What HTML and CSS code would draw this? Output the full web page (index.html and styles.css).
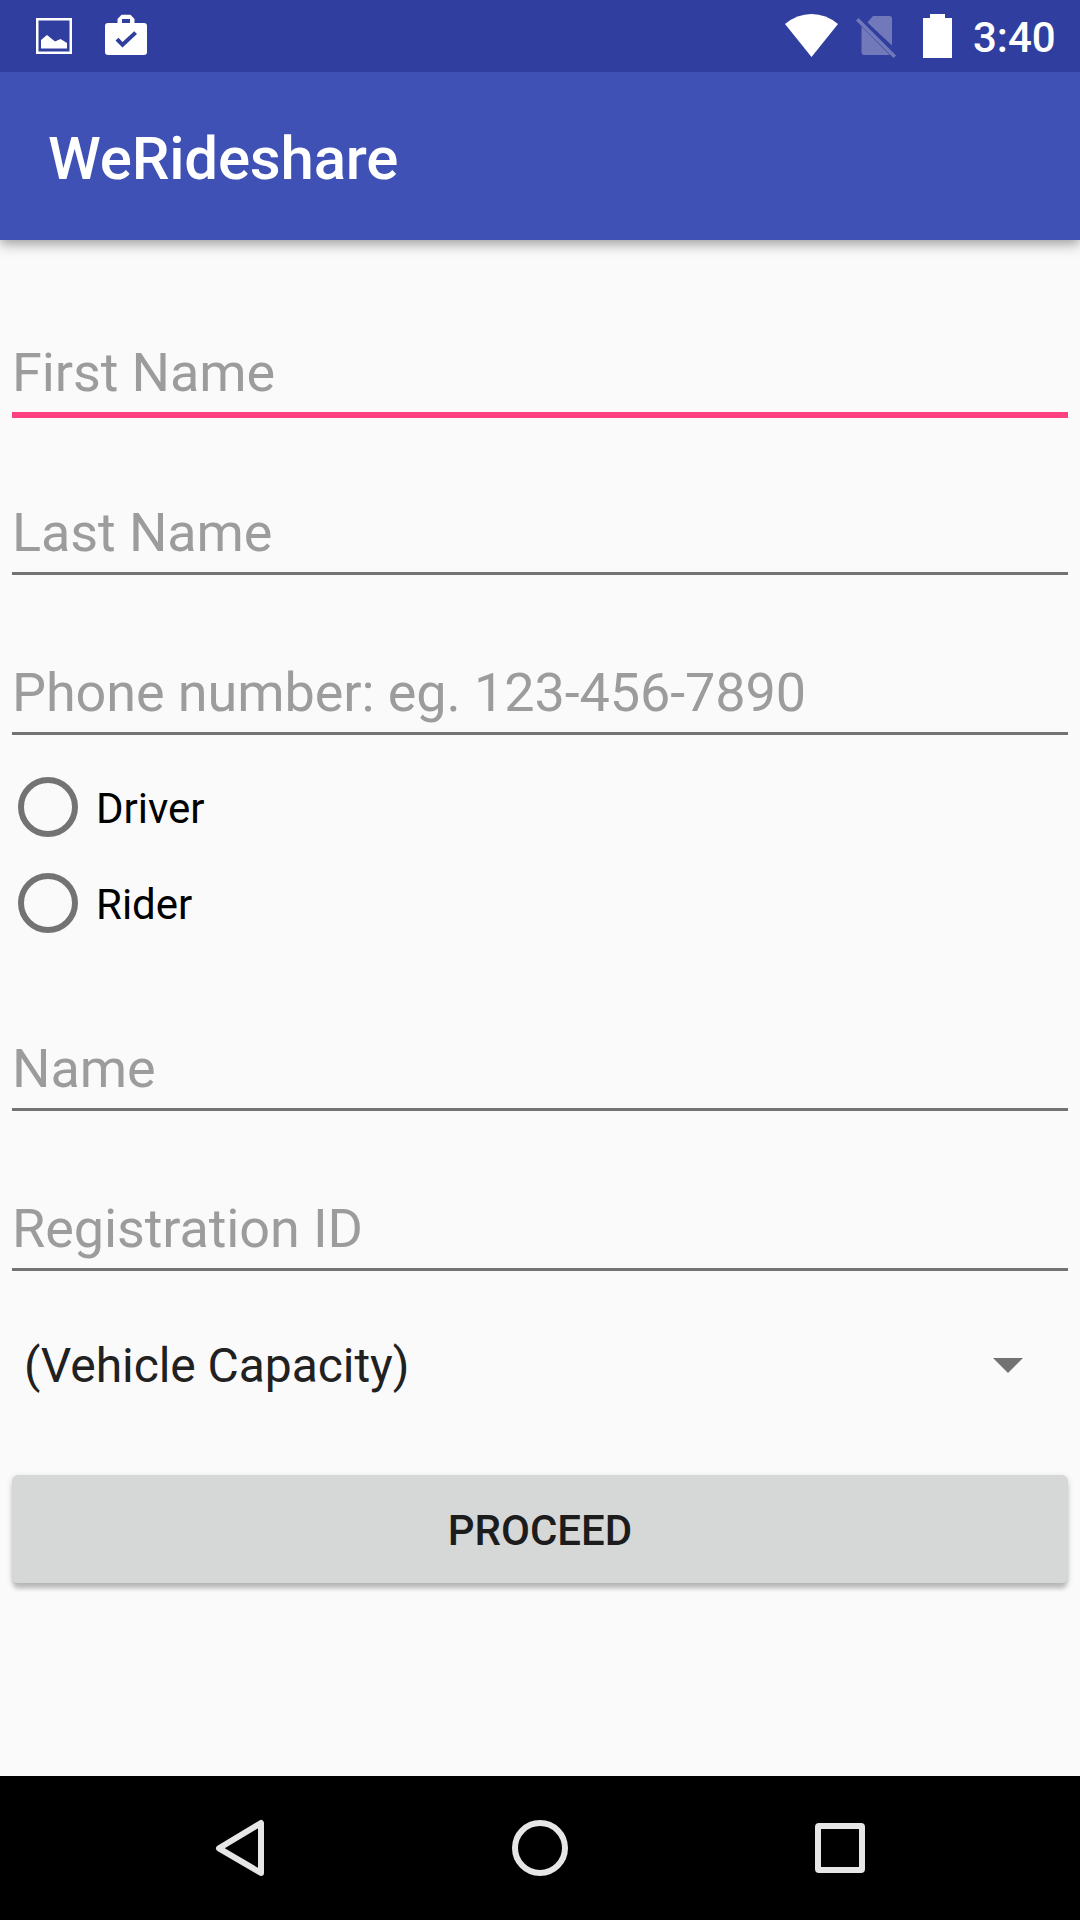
FILE: index.html
```html
<!DOCTYPE html>
<html lang="en">
<head>
<meta charset="utf-8">
<title>WeRideshare</title>
<link rel="stylesheet" href="styles.css">
</head>
<body>
<div class="screen">
  <div class="status-bar">
    <svg class="status-icons" width="160" height="72" viewBox="0 0 160 72">
      <rect x="37.25" y="19.25" width="33.5" height="33.5" fill="none" stroke="#fff" stroke-width="2.5"/>
      <path fill="#fff" d="M41 48.500V40l6-5 8 6.500 5.500-2.500 6.500 4v5.500z"/>
      <path fill="#fff" fill-rule="evenodd" d="M108 23h9.500v-4l4-4.300h9l4 4.300v4h9.500q3 0 3 3v26q0 3-3 3h-36q-3 0-3-3V26q0-3 3-3zM122 19v4h8v-4zM115.500 40.500l7 7 14.500-13.500-2.800-2.800-11.700 10.800-4-4.300z"/>
    </svg>
    <svg class="status-icons system-icons" width="190" height="72" viewBox="780 0 190 72">
      <path fill="#fff" d="M785 24Q797 14 811.500 14T838 24L811.500 57z"/>
      <path fill="#7279bb" d="M867.500 22.500l5.500-6.500h16.500q2.500 0 2.500 2.500V45.500zM861.500 26.500l28 28.200-.5.300h-24.500q-3 0-3-3zM858.500 18l37.500 37.500-2.500 2.500-37.500-37.500z"/>
      <path fill="#fff" d="M930 14h15v4h7v40h-29V18h7z"/>
    </svg>
    <span class="clock">3:40</span>
  </div>
  <header class="app-bar"><h1 class="title">WeRideshare</h1></header>
  <form class="form">
    <div class="field focused"><input type="text" placeholder="First Name"></div>
    <div class="field"><input type="text" placeholder="Last Name"></div>
    <div class="field"><input type="text" placeholder="Phone number: eg. 123-456-7890"></div>
    <div class="radios">
      <label class="option"><input class="radio" type="radio" name="role"><span>Driver</span></label>
      <label class="option"><input class="radio" type="radio" name="role"><span>Rider</span></label>
    </div>
    <div class="field"><input type="text" placeholder="Name"></div>
    <div class="field"><input type="text" placeholder="Registration ID"></div>
    <div class="spinner">
      <span>(Vehicle Capacity)</span>
      <svg width="30" height="15" viewBox="0 0 30 15"><path fill="#737373" d="M0 0h30L15 15z"/></svg>
    </div>
    <button class="proceed" type="button">PROCEED</button>
  </form>
  <nav class="nav-bar">
    <svg width="60" height="60" viewBox="0 0 60 60"><path d="M51 5v50L9 30.300z"/></svg>
    <svg width="60" height="60" viewBox="0 0 60 60"><circle cx="30" cy="30" r="25"/></svg>
    <svg width="60" height="60" viewBox="0 0 60 60"><rect x="8" y="8" width="44" height="44" rx="1"/></svg>
  </nav>
</div>
</body>
</html>
```
FILE: styles.css
```css
* { box-sizing: border-box; }
body { margin: 0; font-family: Roboto, sans-serif; }
.screen {
  display: flex;
  flex-direction: column;
  width: 1080px;
  height: 1920px;
  background: #fafafa;
  overflow: hidden;
}
.status-bar {
  display: flex;
  flex: none;
  z-index: 1;
  height: 72px;
  padding-right: 24px;
  background: #303f9f;
  color: #fff;
}
.status-icons { display: block; flex: none; }
.system-icons { margin-left: auto; }
.clock {
  width: 86px;
  padding-left: 3px;
  font-size: 42px;
  font-weight: 500;
  line-height: 75px;
  white-space: nowrap;
}
.app-bar {
  flex: none;
  height: 168px;
  padding: 0 48px;
  background: #3f51b5;
  box-shadow: 0 4px 12px rgba(0, 0, 0, 0.38);
}
.title {
  margin: 0;
  color: #fff;
  font-size: 60px;
  font-weight: 500;
  letter-spacing: -0.2px;
  line-height: 173px;
}
.form {
  display: flex;
  flex: 1;
  flex-direction: column;
  padding: 32px 12px 0;
}
.field {
  flex: none;
  height: 160px;
  padding-top: 68px;
}
.field input {
  display: block;
  width: 100%;
  height: 75px;
  padding: 0 0 8px;
  border: 0;
  border-bottom: 3px solid #737373;
  border-radius: 0;
  outline: 0;
  background: transparent;
  font: 54px/64px Roboto, sans-serif;
  letter-spacing: -0.1px;
}
.field input::placeholder { color: #9c9c9c; opacity: 1; }
.focused input { height: 78px; border-bottom: 6px solid #ff4081; }
.radios { padding: 7px 0 17px; }
.option {
  display: flex;
  align-items: center;
  gap: 18px;
  height: 96px;
  padding-left: 6px;
  font-size: 42px;
  line-height: 50px;
}
.radio {
  width: 60px;
  height: 60px;
  margin: 0;
  appearance: none;
  border: 6px solid #737373;
  border-radius: 50%;
}
.option span { padding-top: 3px; }
.spinner {
  display: flex;
  align-items: center;
  justify-content: space-between;
  flex: none;
  height: 155px;
  padding: 0 45px 0 12px;
  color: #212121;
  font-size: 48px;
  letter-spacing: -0.06px;
}
.proceed {
  flex: none;
  width: 1056px;
  height: 108px;
  margin-top: 32px;
  padding: 3px 0 0;
  border: 0;
  border-radius: 6px;
  background: #d6d8d7;
  box-shadow: 0 7px 4px -1px rgba(0, 0, 0, 0.18), 0 2px 6px rgba(0, 0, 0, 0.16);
  color: #1c1c1c;
  font: 500 42px/50px Roboto, sans-serif;
}
.nav-bar {
  display: flex;
  align-items: center;
  justify-content: center;
  flex: none;
  gap: 240px;
  height: 144px;
  background: #000;
}
.nav-bar svg {
  fill: none;
  stroke: #e6e6e6;
  stroke-width: 6;
  stroke-linejoin: round;
}
```
